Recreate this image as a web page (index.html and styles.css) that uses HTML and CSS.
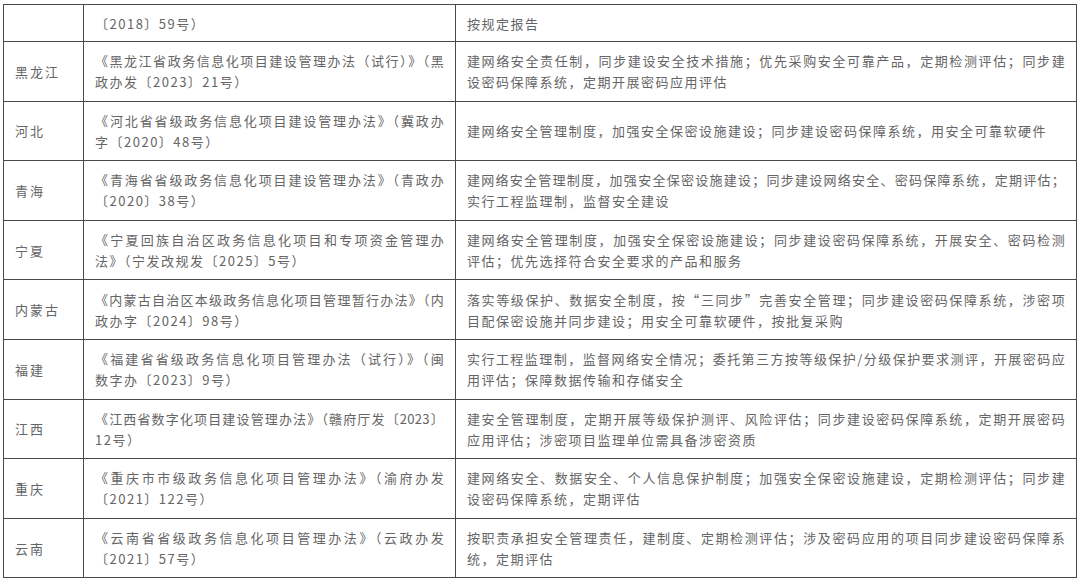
FILE: index.html
```html
<!DOCTYPE html>
<html lang="zh-CN">
<head>
<meta charset="utf-8">
<title>政务信息化项目安全管理要求</title>
<link rel="stylesheet" href="styles.css">
</head>
<body>
<table class="policy">
  <colgroup>
    <col class="c-region">
    <col class="c-doc">
    <col class="c-req">
  </colgroup>
  <tbody>
    <tr class="first">
      <td class="region"></td>
      <td>〔2018〕59号）</td>
      <td>按规定报告</td>
    </tr>
    <tr>
      <td class="region">黑龙江</td>
      <td><span class="ln">《黑龙江省政务信息化项目建设管理办法（试行）》（黑</span><span class="ln">政办发〔2023〕21号）</span></td>
      <td><span class="ln">建网络安全责任制，同步建设安全技术措施；优先采购安全可靠产品，定期检测评估；同步建</span><span class="ln">设密码保障系统，定期开展密码应用评估</span></td>
    </tr>
    <tr>
      <td class="region">河北</td>
      <td><span class="ln">《河北省省级政务信息化项目建设管理办法》（冀政办</span><span class="ln">字〔2020〕48号）</span></td>
      <td>建网络安全管理制度，加强安全保密设施建设；同步建设密码保障系统，用安全可靠软硬件</td>
    </tr>
    <tr>
      <td class="region">青海</td>
      <td><span class="ln">《青海省省级政务信息化项目建设管理办法》（青政办</span><span class="ln">〔2020〕38号）</span></td>
      <td><span class="ln">建网络安全管理制度，加强安全保密设施建设；同步建设网络安全、密码保障系统，定期评估；</span><span class="ln">实行工程监理制，监督安全建设</span></td>
    </tr>
    <tr>
      <td class="region">宁夏</td>
      <td><span class="ln">《宁夏回族自治区政务信息化项目和专项资金管理办</span><span class="ln">法》（宁发改规发〔2025〕5号）</span></td>
      <td><span class="ln">建网络安全管理制度，加强安全保密设施建设；同步建设密码保障系统，开展安全、密码检测</span><span class="ln">评估；优先选择符合安全要求的产品和服务</span></td>
    </tr>
    <tr>
      <td class="region">内蒙古</td>
      <td><span class="ln">《内蒙古自治区本级政务信息化项目管理暂行办法》（内</span><span class="ln">政办字〔2024〕98号）</span></td>
      <td><span class="ln">落实等级保护、数据安全制度，按“三同步”完善安全管理；同步建设密码保障系统，涉密项</span><span class="ln">目配保密设施并同步建设；用安全可靠软硬件，按批复采购</span></td>
    </tr>
    <tr>
      <td class="region">福建</td>
      <td><span class="ln">《福建省省级政务信息化项目管理办法（试行）》（闽</span><span class="ln">数字办〔2023〕9号）</span></td>
      <td><span class="ln">实行工程监理制，监督网络安全情况；委托第三方按等级保护/分级保护要求测评，开展密码应</span><span class="ln">用评估；保障数据传输和存储安全</span></td>
    </tr>
    <tr>
      <td class="region">江西</td>
      <td><span class="ln">《江西省数字化项目建设管理办法》（赣府厅发〔2023〕</span><span class="ln">12号）</span></td>
      <td><span class="ln">建安全管理制度，定期开展等级保护测评、风险评估；同步建设密码保障系统，定期开展密码</span><span class="ln">应用评估；涉密项目监理单位需具备涉密资质</span></td>
    </tr>
    <tr>
      <td class="region">重庆</td>
      <td><span class="ln">《重庆市市级政务信息化项目管理办法》（渝府办发</span><span class="ln">〔2021〕122号）</span></td>
      <td><span class="ln">建网络安全、数据安全、个人信息保护制度；加强安全保密设施建设，定期检测评估；同步建</span><span class="ln">设密码保障系统，定期评估</span></td>
    </tr>
    <tr>
      <td class="region">云南</td>
      <td><span class="ln">《云南省省级政务信息化项目管理办法》（云政办发</span><span class="ln">〔2021〕57号）</span></td>
      <td><span class="ln">按职责承担安全管理责任，建制度、定期检测评估；涉及密码应用的项目同步建设密码保障系</span><span class="ln">统，定期评估</span></td>
    </tr>
  </tbody>
</table>
</body>
</html>
```
FILE: styles.css
```css
html, body {
  background: #ffffff;
}
body {
  position: relative;
  margin: 4px 0 0 3px;
  font-family: "Noto Sans CJK SC", "Liberation Sans", sans-serif;
  font-size: 13px;
  color: #656565;
}
/* faint page-corner marks above the table */
body::before,
body::after {
  content: "";
  position: absolute;
  top: -4px;
  height: 3px;
  border-bottom: 1px solid #d4d4d4;
}
body::before {
  left: 13px;
  width: 25px;
  border-right: 1px solid #d4d4d4;
}
body::after {
  left: 1063px;
  width: 14px;
  border-left: 1px solid #d4d4d4;
}
.policy {
  position: relative;
  z-index: 1;
  border-collapse: collapse;
  table-layout: fixed;
  width: 1073px;
}
.c-region { width: 80px; }
.c-doc { width: 372px; }
.c-req { width: 621px; }
.policy td {
  border: 1px solid #4a4a4a;
  padding: 8.3px 11px;
  line-height: 21px;
  letter-spacing: 1.5px;
  text-align: left;
  vertical-align: middle;
}
.policy tr.first td {
  padding-top: 7.5px;
  padding-bottom: 7.5px;
}
.policy td.region {
  letter-spacing: 2px;
}
.ln {
  display: block;
}
.ln:not(:last-child) {
  letter-spacing: 0.3px;
  text-align: justify;
  text-align-last: justify;
}
```
